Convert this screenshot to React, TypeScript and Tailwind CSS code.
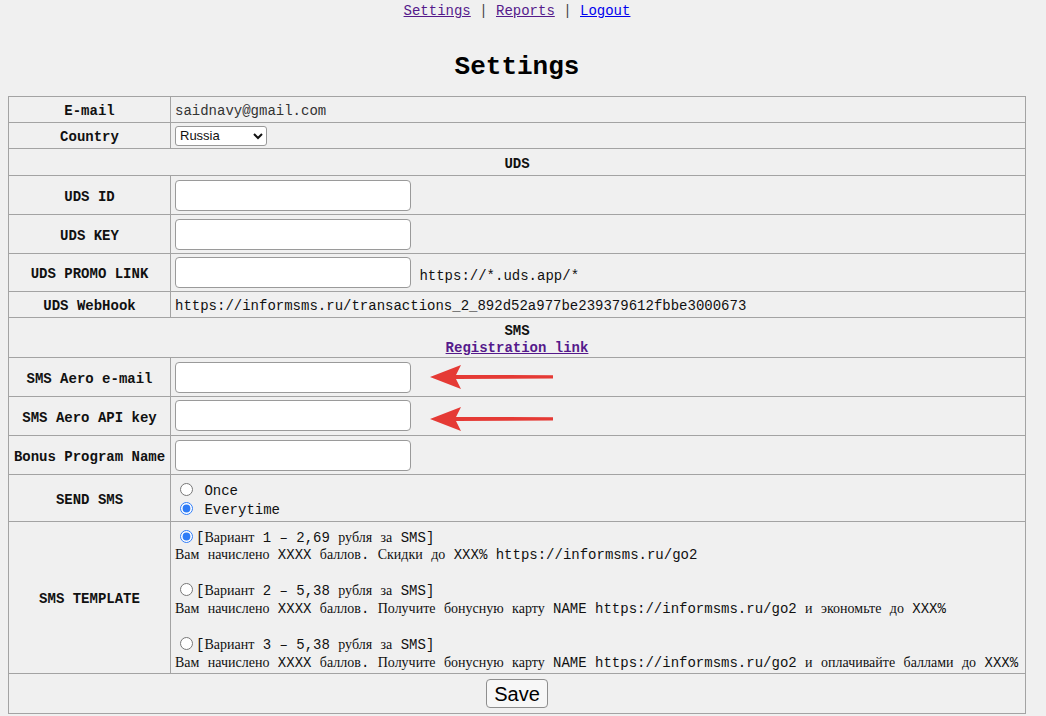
import React from "react";

// Cyrillic falls back to a serif face in the original page, Latin stays mono
function Mixed({ text }: { text: string }) {
  const parts = text.split(/([А-Яа-яЁё]+)/);
  return (
    <>
      {parts.map((p, i) =>
        i % 2 === 1 ? (
          <span key={i} className="font-['Liberation_Serif',serif]">
            {p}
          </span>
        ) : (
          <React.Fragment key={i}>{p}</React.Fragment>
        ),
      )}
    </>
  );
}

function Arrow({ low }: { low?: boolean }) {
  return (
    <svg
      width="124"
      height="26"
      viewBox="0 0 124 26"
      className={low ? "ml-[19px] inline-block align-[-12px]" : "ml-[19px] inline-block align-middle"}
    >
      <path d="M0 13 L31 1 L26 11 L123 11.2 L123 14.6 L26 15 L31 25 Z" fill="#e53a35" />
    </svg>
  );
}

const label = "border border-[#a3a3a3] px-[4px] pt-[4px] text-center font-bold align-middle whitespace-nowrap";
const value = "border border-[#a3a3a3] pl-[4px] pr-[3px] align-middle";
const inputCls = "w-[236px] h-[31px] border border-[#9a9a9a] rounded-[4px] bg-white align-middle";

const templates = [
  {
    head: "[Вариант 1 – 2,69 рубля за SMS]",
    body: "Вам начислено XXXX баллов. Скидки до XXX% https://informsms.ru/go2",
    checked: true,
  },
  {
    head: "[Вариант 2 – 5,38 рубля за SMS]",
    body: "Вам начислено XXXX баллов. Получите бонусную карту NAME https://informsms.ru/go2 и экономьте до XXX%",
    checked: false,
  },
  {
    head: "[Вариант 3 – 5,38 рубля за SMS]",
    body: "Вам начислено XXXX баллов. Получите бонусную карту NAME https://informsms.ru/go2 и оплачивайте баллами до XXX%",
    checked: false,
  },
];

export default function App() {
  return (
    <div className="min-h-[716px] bg-[#f0f0f0] text-[14px] leading-[17px] text-[#111] font-['Liberation_Mono',monospace]">
      <div className="ml-[8px] w-[1018px] pt-[3px]">
        <div className="text-center text-[#444]">
          <a href="#" className="text-[#551a8b] underline">Settings</a>
          {" | "}
          <a href="#" className="text-[#551a8b] underline">Reports</a>
          {" | "}
          <a href="#" className="text-[#0000ee] underline">Logout</a>
        </div>

        <h1 className="mt-[32px] mb-[14px] text-center text-[26px] leading-[30px] font-bold text-black">Settings</h1>

        <table className="w-full border-collapse border border-[#777]">
          <tbody>
            <tr>
              <td className={`${label} w-[162px] h-[26px]`}>E-mail</td>
              <td className={`${value} pt-[4px] text-[#333]`}>saidnavy@gmail.com</td>
            </tr>
            <tr>
              <td className={`${label} h-[26px]`}>Country</td>
              <td className={value}>
                <select
                  defaultValue="Russia"
                  className="w-[92px] h-[20px] border border-[#999] rounded-[3px] bg-white text-[13px] font-['Liberation_Sans',sans-serif] align-middle"
                >
                  <option>Russia</option>
                  <option>Ukraine</option>
                  <option>Kazakhstan</option>
                </select>
              </td>
            </tr>
            <tr>
              <td colSpan={2} className={`${label} h-[27px]`}>UDS</td>
            </tr>
            <tr>
              <td className={`${label} h-[39px]`}>UDS ID</td>
              <td className={value}>
                <input type="text" className={inputCls} />
              </td>
            </tr>
            <tr>
              <td className={`${label} h-[39px]`}>UDS KEY</td>
              <td className={value}>
                <input type="text" className={inputCls} />
              </td>
            </tr>
            <tr>
              <td className={`${label} h-[38px]`}>UDS PROMO LINK</td>
              <td className={value}>
                <input type="text" className={inputCls} />
                <span className="relative top-[4px] align-middle"> https://*.uds.app/*</span>
              </td>
            </tr>
            <tr>
              <td className={`${label} h-[26px]`}>UDS WebHook</td>
              <td className={`${value} pt-[4px]`}>https://informsms.ru/transactions_2_892d52a977be239379612fbbe3000673</td>
            </tr>
            <tr>
              <td colSpan={2} className={`${label} h-[40px]`}>
                SMS
                <br />
                <a href="#" className="text-[#551a8b] underline">Registration link</a>
              </td>
            </tr>
            <tr>
              <td className={`${label} h-[39px]`}>SMS Aero e-mail</td>
              <td className={value}>
                <input type="text" className={inputCls} />
                <Arrow />
              </td>
            </tr>
            <tr>
              <td className={`${label} h-[39px]`}>SMS Aero API key</td>
              <td className={value}>
                <input type="text" className={inputCls} />
                <Arrow low />
              </td>
            </tr>
            <tr>
              <td className={`${label} h-[39px]`}>Bonus Program Name</td>
              <td className={value}>
                <input type="text" className={inputCls} />
              </td>
            </tr>
            <tr>
              <td className={`${label} h-[47px]`}>SEND SMS</td>
              <td className={`${value} pt-[6px] leading-[19px]`}>
                <label className="block">
                  <input type="radio" name="send" className="ml-[5px] mr-[3px] w-[13px] h-[13px] align-[-1px]" />
                  {" Once"}
                </label>
                <label className="block">
                  <input type="radio" name="send" defaultChecked className="ml-[5px] mr-[3px] w-[13px] h-[13px] align-[-1px] accent-[#2f7cf6]" />
                  {" Everytime"}
                </label>
              </td>
            </tr>
            <tr>
              <td className={`${label} h-[152px]`}>SMS TEMPLATE</td>
              <td className={`${value} pt-[6px] leading-[17.6px] whitespace-nowrap`}>
                {templates.map((t, i) => (
                  <div key={i} className={i > 0 ? "mt-[17.6px]" : ""}>
                    <div className="h-[17.6px] overflow-hidden">
                      <input
                        type="radio"
                        name="tpl"
                        defaultChecked={t.checked}
                        className="ml-[5px] mr-[3px] w-[13px] h-[13px] align-[-1px] accent-[#2f7cf6]"
                      />
                      <Mixed text={t.head} />
                    </div>
                    <div>
                      <Mixed text={t.body} />
                    </div>
                  </div>
                ))}
              </td>
            </tr>
            <tr>
              <td colSpan={2} className="border border-[#a3a3a3] h-[40px] text-center align-middle">
                <button className="h-[29px] px-[7px] border border-[#8e8e8e] rounded-[4px] bg-[#f7f7f7] text-[20px] leading-[24px] font-['Liberation_Sans',sans-serif] text-black">
                  Save
                </button>
              </td>
            </tr>
          </tbody>
        </table>
      </div>
    </div>
  );
}
